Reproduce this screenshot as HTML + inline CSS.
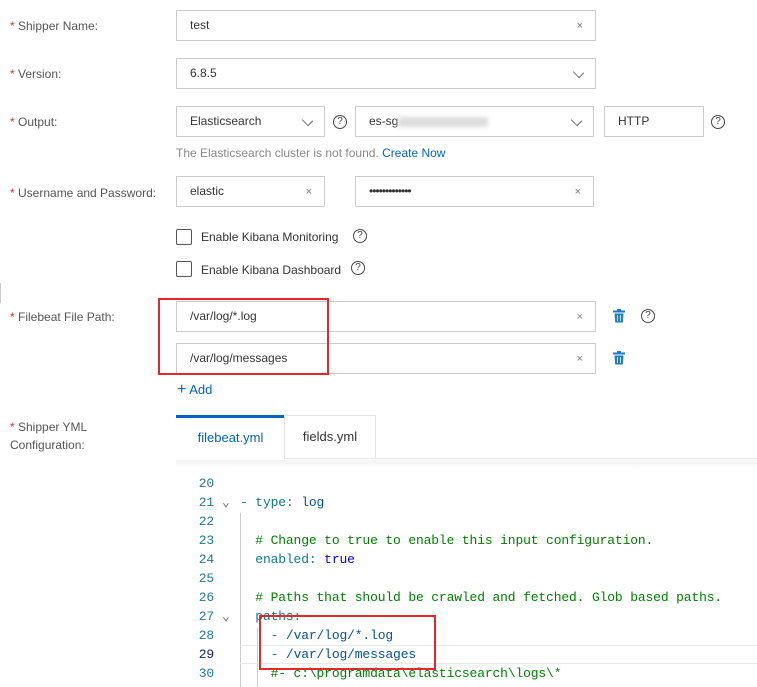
<!DOCTYPE html>
<html><head><meta charset="utf-8"><style>
*{box-sizing:border-box;margin:0;padding:0}
body{width:757px;height:687px;background:#fff;font-family:"Liberation Sans",sans-serif;font-size:12px;color:#333;position:relative;overflow:hidden}
.a{position:absolute}
.lbl{color:#555;font-size:12px}
.lbl b{color:#d93026;font-weight:normal}
.in{position:absolute;border:1px solid #ccc;height:31px;background:#fff;padding-left:13px;line-height:29px;font-size:12px;color:#333}
.x{position:absolute;right:12px;top:1px;color:#777;font-size:11px}
.ch{position:absolute;right:8px;top:9px;width:9px;height:9px;border-right:1.3px solid #666;border-bottom:1.3px solid #666;transform:rotate(45deg) scale(1,0.8)}
.q{position:absolute;width:14px;height:14px;border:1.3px solid #444;border-radius:50%;font-size:10px;line-height:12px;text-align:center;color:#444}
.cb{position:absolute;width:16px;height:16px;border:1px solid #555;border-radius:2px}
.code{font-family:"Liberation Mono",monospace;font-size:13px;letter-spacing:-0.15px;position:absolute;white-space:pre;line-height:19px}
.ln{color:#237893;text-align:right;width:40px;left:174px}
.g{color:#008000}.t{color:#0e7c86}.bl{color:#0000ff}.v{color:#0451a5}
</style></head><body>
<div class="a" style="left:0;top:283px;width:2px;height:20px;border-left:1px solid #ccc"></div>

<div class="a lbl" style="left:10px;top:19px"><b>*</b> Shipper Name:</div>
<div class="in" style="left:176px;top:10px;width:420px">test<span class="x">×</span></div>

<div class="a lbl" style="left:10px;top:67px"><b>*</b> Version:</div>
<div class="in" style="left:176px;top:58px;width:420px">6.8.5<span class="ch" style="right:12px"></span></div>

<div class="a lbl" style="left:10px;top:115px"><b>*</b> Output:</div>
<div class="in" style="left:176px;top:106px;width:149px">Elasticsearch<span class="ch" style="right:12px"></span></div>
<div class="q" style="left:333px;top:115px">?</div>
<div class="in" style="left:355px;top:106px;width:239px">es-sg<span style="display:inline-block;width:90px;height:10px;background:#ddd;filter:blur(2px);vertical-align:middle"></span><span class="ch" style="right:12px"></span></div>
<div class="in" style="left:604px;top:106px;width:100px">HTTP</div>
<div class="q" style="left:711px;top:115px">?</div>
<div class="a" style="left:176px;top:146px;color:#888">The Elasticsearch cluster is not found. <span style="color:#0064c8">Create Now</span></div>

<div class="a lbl" style="left:10px;top:186px"><b>*</b> Username and Password:</div>
<div class="in" style="left:176px;top:176px;width:149px">elastic<span class="x">×</span></div>
<div class="in" style="left:355px;top:176px;width:239px;letter-spacing:-1px">•••••••••••••<span class="x" style="letter-spacing:0">×</span></div>

<div class="cb" style="left:176px;top:229px"></div>
<div class="a" style="left:201px;top:230px">Enable Kibana Monitoring</div>
<div class="q" style="left:353px;top:229px">?</div>
<div class="cb" style="left:176px;top:261px"></div>
<div class="a" style="left:201px;top:263px">Enable Kibana Dashboard</div>
<div class="q" style="left:351px;top:261px">?</div>

<div class="a lbl" style="left:10px;top:310px"><b>*</b> Filebeat File Path:</div>
<div class="in" style="left:176px;top:301px;width:420px">/var/log/*.log<span class="x">×</span></div>
<div class="in" style="left:176px;top:343px;width:420px">/var/log/messages<span class="x">×</span></div>
<svg class="a" style="left:613px;top:309px" width="12" height="14" viewBox="0 0 12 14"><rect x="0" y="1.5" width="12" height="2" fill="#1d7bc7"/><rect x="4" y="0" width="4" height="2" fill="#1d7bc7"/><path d="M1.5 4.5h9l-.7 9h-7.6z" fill="#1d7bc7"/><path d="M4.5 6v6M7.5 6v6" stroke="#fff" stroke-width=".8"/></svg>
<div class="q" style="left:641px;top:309px">?</div>
<svg class="a" style="left:613px;top:351px" width="12" height="14" viewBox="0 0 12 14"><rect x="0" y="1.5" width="12" height="2" fill="#1d7bc7"/><rect x="4" y="0" width="4" height="2" fill="#1d7bc7"/><path d="M1.5 4.5h9l-.7 9h-7.6z" fill="#1d7bc7"/><path d="M4.5 6v6M7.5 6v6" stroke="#fff" stroke-width=".8"/></svg>
<div class="a" style="left:158px;top:298px;width:171px;height:77px;border:2px solid #e5262b"></div>
<div class="a" style="left:177px;top:381px;color:#0064c8;font-size:13px"><span style="font-size:16px">+</span> Add</div>

<div class="a lbl" style="left:10px;top:418px;line-height:18px"><b>*</b> Shipper YML<br>Configuration:</div>
<div class="a" style="left:176px;top:458px;width:581px;border-top:1px solid #e3e3e3"></div>
<div class="a" style="left:176px;top:415px;width:109px;height:44px;border-top:3px solid #0064c8;background:#fff;text-align:center;line-height:40px;color:#0064c8;font-size:13px">filebeat.yml</div>
<div class="a" style="left:284px;top:415px;width:92px;height:44px;border:1px solid #e3e3e3;border-bottom:none;text-align:center;line-height:42px;font-size:13px;color:#333">fields.yml</div>
<div class="a" style="left:176px;top:460px;width:581px;height:10px;background:linear-gradient(#f3f3f3,#fff)"></div>

<div class="a" style="left:240px;top:513px;width:1px;height:174px;background:#ccc"></div>
<div class="a" style="left:257px;top:628px;width:1px;height:59px;background:#ccc"></div>
<div class="a" style="left:240px;top:645px;width:517px;height:19px;border-top:1px solid #e8e8e8;border-bottom:1px solid #e8e8e8"></div>
<div class="code ln" style="top:474px">20
21
22
23
24
25
26
27
28
<span style="color:#0b216f">29</span>
30</div>
<div class="code" style="left:222px;top:493px;color:#666">⌄</div>
<div class="code" style="left:222px;top:607px;color:#666">⌄</div>
<div class="code" style="left:240px;top:474px">
<span class="t">- type: </span><span class="v">log</span>

<span class="g">  # Change to true to enable this input configuration.</span>
<span class="t">  enabled: </span><span class="bl">true</span>

<span class="g">  # Paths that should be crawled and fetched. Glob based paths.</span>
<span class="t">  paths:</span>
<span class="t">    - </span><span class="v">/var/log/*.log</span>
<span class="t">    - </span><span class="v">/var/log/messages</span>
<span class="g">    #- c:\programdata\elasticsearch\logs\*</span></div>
<div class="a" style="left:259px;top:615px;width:177px;height:55px;border:2px solid #e5262b"></div>
</body></html>
